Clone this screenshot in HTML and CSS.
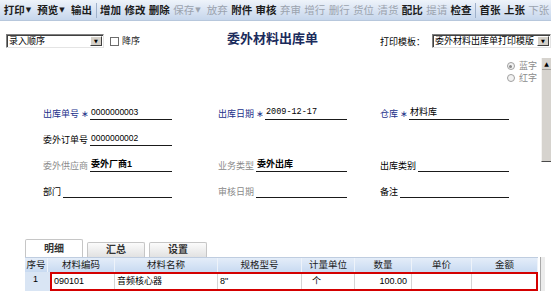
FILE: index.html
```html
<!DOCTYPE html>
<html lang="zh-CN">
<head>
    <meta charset="UTF-8">
    <title>委外材料出库单</title>
    <link rel="stylesheet" href="styles.css">
</head>
<body>
<div class="page">
    <div class="toolbar">
        <span class="tb-btn">打印<i class="arrow">▼</i></span>
        <span class="tb-btn">预览<i class="arrow">▼</i></span>
        <span class="tb-btn">输出</span>
        <span class="tb-sep"></span>
        <span class="tb-btn">增加</span>
        <span class="tb-btn">修改</span>
        <span class="tb-btn">删除</span>
        <span class="tb-btn off">保存<i class="arrow">▼</i></span>
        <span class="tb-btn off">放弃</span>
        <span class="tb-btn">附件</span>
        <span class="tb-btn">审核</span>
        <span class="tb-btn off">弃审</span>
        <span class="tb-btn off">增行</span>
        <span class="tb-btn off">删行</span>
        <span class="tb-btn off">货位</span>
        <span class="tb-btn off">清货</span>
        <span class="tb-btn">配比</span>
        <span class="tb-btn off">提请</span>
        <span class="tb-btn">检查</span>
        <span class="tb-sep"></span>
        <span class="tb-btn">首张</span>
        <span class="tb-btn">上张</span>
        <span class="tb-btn off">下张</span>
    </div>

    <div class="head">
        <div class="select sort-select">
            <span class="select-text">录入顺序</span>
            <span class="select-btn">▼</span>
        </div>
        <span class="check"></span>
        <span class="check-label">降序</span>
        <span class="title">委外材料出库单</span>
        <span class="tpl-label">打印模板：</span>
        <div class="select tpl-select">
            <span class="select-text">委外材料出库单打印模版</span>
            <span class="select-btn">▼</span>
        </div>
    </div>

    <div class="sign">
        <label class="radio"><span class="radio-dot on"></span>蓝字</label>
        <label class="radio"><span class="radio-dot"></span>红字</label>
    </div>

    <div class="form">
        <div class="field req">
            <span class="field-label">出库单号</span><span class="star">∗</span>
            <span class="field-value code">0000000003</span>
        </div>
        <div class="field req">
            <span class="field-label">出库日期</span><span class="star">∗</span>
            <span class="field-value date">2009-12-17</span>
        </div>
        <div class="field req">
            <span class="field-label">仓库</span><span class="star">∗</span>
            <span class="field-value">材料库</span>
        </div>

        <div class="field">
            <span class="field-label">委外订单号</span>
            <span class="field-value code">0000000002</span>
        </div>
        <div></div>
        <div></div>

        <div class="field muted">
            <span class="field-label">委外供应商</span>
            <span class="field-value strong">委外厂商1</span>
        </div>
        <div class="field muted">
            <span class="field-label">业务类型</span>
            <span class="field-value strong">委外出库</span>
        </div>
        <div class="field">
            <span class="field-label">出库类别</span>
            <span class="field-value"></span>
        </div>

        <div class="field">
            <span class="field-label">部门</span>
            <span class="field-value"></span>
        </div>
        <div class="field muted">
            <span class="field-label">审核日期</span>
            <span class="field-value"></span>
        </div>
        <div class="field">
            <span class="field-label">备注</span>
            <span class="field-value"></span>
        </div>
    </div>

    <div class="tabs">
        <span class="tab active">明细</span>
        <span class="tab">汇总</span>
        <span class="tab">设置</span>
    </div>

    <div class="grid">
        <div class="sheet">
            <div class="grid-head">
                <span class="c1">序号</span>
                <span class="c2">材料编码</span>
                <span class="c3">材料名称</span>
                <span class="c4">规格型号</span>
                <span class="c5">计量单位</span>
                <span class="c6">数量</span>
                <span class="c7">单价</span>
                <span class="c8">金额</span>
            </div>
            <div class="grid-row">
                <span class="row-no">1</span>
                <div class="row-box">
                    <span class="d2">090101</span>
                    <span class="d3">音频核心器</span>
                    <span class="d4">8"</span>
                    <span class="d5">个</span>
                    <span class="d6">100.00</span>
                    <span class="d7"></span>
                    <span class="d8"></span>
                </div>
            </div>
        </div>
        <div class="grid-scroll"></div>
    </div>

    <div class="vscroll"><div class="vscroll-up">▲</div></div>
</div>
</body>
</html>
```

FILE: styles.css
```css
* {
    box-sizing: border-box;
}

body {
    margin: 0;
    background-color: #fff;
    color: #000;
    font-family: "Liberation Sans", "Noto Sans CJK SC", sans-serif;
}

.page {
    position: relative;
    width: 551px;
    height: 293px;
    overflow: hidden;
}

/* toolbar */
.toolbar {
    display: flex;
    align-items: center;
    height: 21px;
    padding-left: 2px;
    background: linear-gradient(#eef3fa, #c6d6ec);
    border-bottom: 1px solid #b7c7dc;
    font-size: 10.5px;
    line-height: 13px;
    font-weight: bold;
    white-space: nowrap;
}

.tb-btn {
    display: flex;
    align-items: center;
    padding: 0 1.7px;
    color: #1c1c1c;
}

.tb-btn.off {
    color: #9ba3ae;
    font-weight: normal;
}

.arrow {
    display: inline-block;
    width: 6px;
    margin-left: 1px;
    margin-right: 2.3px;
    font-style: normal;
    font-size: 7px;
    font-family: "DejaVu Sans", sans-serif;
}

.tb-sep {
    width: 1px;
    height: 15px;
    margin: 0 2px;
    background-color: #9fb1cb;
}

/* sort + title + print template */
.head {
    display: flex;
    align-items: center;
    height: 14px;
    margin-top: 13px;
    padding-left: 6px;
    font-size: 9px;
    line-height: 11px;
    white-space: nowrap;
}

.select {
    display: flex;
    height: 14px;
    border: 1px solid;
    border-color: #808080 #e4e4e4 #e4e4e4 #808080;
    box-shadow: inset 1px 1px 0 #404040;
    background-color: #fff;
}

.select-text {
    flex: 1;
    padding: 1px 0 0 2px;
    overflow: hidden;
}

.select-btn {
    display: flex;
    align-items: center;
    justify-content: center;
    width: 12px;
    margin: 1px 1px 1px 0;
    background-color: #d4d0c8;
    border: 1px solid;
    border-color: #fff #404040 #404040 #fff;
    font-size: 5px;
    font-family: "DejaVu Sans", sans-serif;
}

.sort-select {
    width: 98px;
}

.check {
    width: 9px;
    height: 9px;
    margin-left: 6px;
    border: 1px solid #6c6c6c;
    background-color: #fff;
}

.check-label {
    margin-left: 3px;
    color: #222;
}

.title {
    align-self: flex-start;
    margin-top: -2px;
    margin-left: 87px;
    font-size: 13px;
    line-height: 13px;
    font-weight: bold;
    color: #1b2b5c;
}

.tpl-label {
    margin-left: 62px;
    margin-top: 2px;
}

.tpl-select {
    width: 119px;
    margin-left: 7px;
}

/* blue / red radio */
.sign {
    display: flex;
    flex-direction: column;
    align-items: flex-end;
    margin-top: 12px;
    padding-right: 14px;
    font-size: 9px;
    line-height: 12px;
    color: #8c8c8c;
}

.radio {
    display: flex;
    align-items: center;
}

.radio-dot {
    display: flex;
    align-items: center;
    justify-content: center;
    width: 8px;
    height: 8px;
    margin-right: 4px;
    border: 1px solid #a0a0a0;
    border-radius: 50%;
    background-color: #f2f2f2;
}

.radio-dot.on::after {
    content: "";
    width: 3px;
    height: 3px;
    border-radius: 50%;
    background-color: #8a8a8a;
}

/* header fields */
.form {
    display: grid;
    grid-template-columns: 175px 162px 130px;
    grid-auto-rows: 26px;
    margin-top: 10px;
    padding-left: 43px;
    font-size: 9px;
    line-height: 11px;
}

.field {
    display: flex;
    align-items: flex-end;
    width: 129px;
}

.field-label {
    margin-right: 2px;
    white-space: nowrap;
}

.req .field-label,
.star {
    color: #22318a;
}

.muted .field-label {
    color: #8a8a8a;
}

.star {
    width: 8px;
    margin-right: 1px;
    text-align: center;
    font-family: "DejaVu Sans", sans-serif;
}

.field-value {
    flex: 1;
    height: 13px;
    padding-left: 1px;
    border-bottom: 1px solid #1a1a1a;
    white-space: nowrap;
}

.field-value.code {
    font-size: 8.5px;
}

.field-value.date {
    font-family: "Liberation Mono", monospace;
    font-size: 8.5px;
}

.field-value.strong {
    font-weight: bold;
}

/* tabs */
.tabs {
    display: flex;
    align-items: flex-end;
    gap: 4px;
    height: 18px;
    margin-top: 41px;
    padding-left: 25px;
    font-size: 10px;
    line-height: 13px;
    font-weight: bold;
}

.tab {
    width: 58px;
    height: 15px;
    text-align: center;
    color: #333;
    border: 1px solid #c6c6c6;
    border-bottom: none;
    border-radius: 2px 2px 0 0;
    background: linear-gradient(#fbfbfb, #e2e2e2);
}

.tab.active {
    height: 18px;
    padding-top: 2px;
    background: #fff;
}

/* detail grid */
.grid {
    display: flex;
    padding-left: 25px;
}

.sheet {
    width: 513px;
}

.grid-head {
    display: flex;
    height: 15px;
    border-top: 1px solid #bfcde0;
    background: linear-gradient(#e4edf9, #c8daf1);
    font-size: 9.5px;
    line-height: 14px;
    color: #1a1a1a;
}

.grid-head span {
    text-align: center;
    border-right: 1px solid #eef3fa;
}

.c1 { width: 23px; }
.c2 { width: 67px; }
.c3 { width: 103px; }
.c4 { width: 84px; }
.c5 { width: 53px; }
.c6 { width: 57px; }
.c7 { width: 60px; }
.c8 { width: 66px; }

.grid-row {
    display: flex;
    height: 19px;
    font-size: 9px;
    line-height: 15px;
}

.row-no {
    width: 25px;
    padding-right: 4px;
    text-align: center;
    background-color: #d9e5f4;
}

.row-box {
    display: flex;
    width: 488px;
    border: 2px solid #d40000;
}

.row-box span {
    padding: 0 2px;
    border-right: 1px solid #d4d4d4;
    white-space: nowrap;
}

.row-box span:last-child {
    border-right: none;
}

.d2 { width: 63px; }
.d3 { width: 103px; }
.d4 { width: 84px; }
.d5 { width: 53px; padding-left: 10px !important; }
.d6 { width: 57px; text-align: right; padding-right: 4px !important; }
.d7 { width: 60px; }
.d8 { width: 64px; }

.grid-scroll {
    width: 5px;
    height: 34px;
    margin-left: 2px;
    border-left: 1px solid #a9a9a9;
    background-color: #ececec;
}

/* form scroll bar peeking in on the right */
.vscroll {
    position: absolute;
    left: 541px;
    top: 58px;
    width: 10px;
    height: 104px;
    background-color: #d6d3ce;
    border-left: 1px solid #f4f3f1;
    border-bottom: 1px solid #4a4a4a;
}

.vscroll-up {
    height: 12px;
    border-bottom: 1px solid #a6a39e;
    text-align: center;
    font-size: 6px;
    line-height: 11px;
    font-family: "DejaVu Sans", sans-serif;
}
```
